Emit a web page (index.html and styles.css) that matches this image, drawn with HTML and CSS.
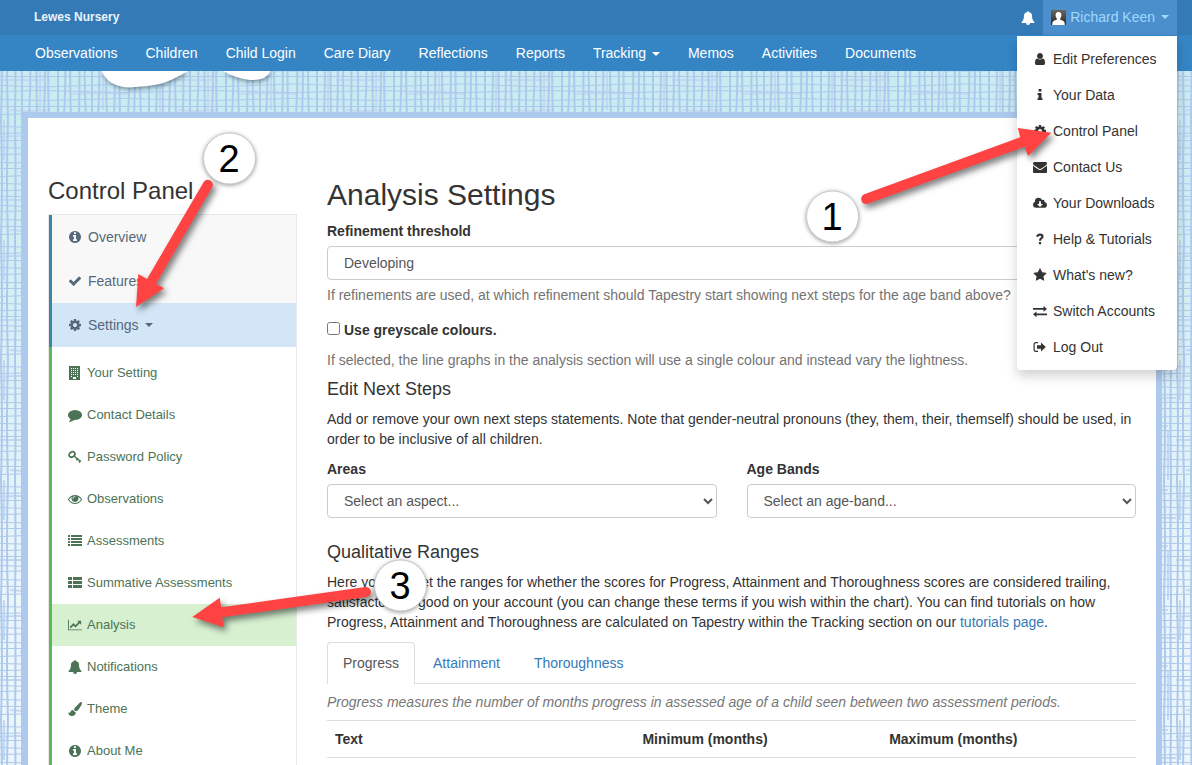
FILE: index.html
```html
<!DOCTYPE html>
<html lang="en">
<head>
    <meta charset="UTF-8">
    <meta name="viewport" content="width=device-width, initial-scale=1.0">
    <title>Analysis Settings - Lewes Nursery</title>
    <link rel="stylesheet" href="styles.css">
</head>
<body>
    <svg class="icon-set" aria-hidden="true">
        <symbol id="i-bell" viewBox="0 0 1792 1792"><path d="M912 1696q0-16-16-16-59 0-101.500-42.500t-42.500-101.500q0-16-16-16t-16 16q0 73 51.500 124.500t124.500 51.500q16 0 16-16zm816-288q0 52-38 90t-90 38h-448q0 106-75 181t-181 75-181-75-75-181h-448q-52 0-90-38t-38-90q50-42 91-88t85-119.500 74.500-158.500 50-206 19.500-260q0-152 117-282.500t307-158.500q-8-19-8-39 0-40 28-68t68-28 68 28 28 68q0 20-8 39 190 28 307 158.500t117 282.500q0 139 19.500 260t50 206 74.500 158.500 85 119.500 91 88z"/></symbol>
        <symbol id="i-check" viewBox="0 0 1792 1792"><path d="M1671 566q0 40-28 68l-724 724-136 136q-28 28-68 28t-68-28l-136-136-362-362q-28-28-28-68t28-68l136-136q28-28 68-28t68 28l294 295 656-657q28-28 68-28t68 28l136 136q28 28 28 68z"/></symbol>
        <symbol id="i-cog" viewBox="0 0 1792 1792"><path d="M1152 896q0-106-75-181t-181-75-181 75-75 181 75 181 181 75 181-75 75-181zm512-109v222q0 12-8 23t-20 13l-185 28q-19 54-39 91 35 50 107 138 10 12 10 25t-9 23q-27 37-99 108t-94 71q-12 0-26-9l-138-108q-44 23-91 38-16 136-29 186-7 28-36 28h-222q-14 0-24.500-8.500t-11.500-21.500l-28-184q-49-16-90-37l-141 107q-10 9-25 9-14 0-25-11-126-114-165-168-7-10-7-23 0-12 8-23 15-21 51-66.500t54-70.500q-27-50-41-99l-183-27q-13-2-21-12.500t-8-23.500v-222q0-12 8-23t19-13l186-28q14-46 39-92-40-57-107-138-10-12-10-24 0-10 9-23 26-36 98.500-107.500t94.500-71.500q13 0 26 10l138 107q44-23 91-38 16-136 29-186 7-28 36-28h222q14 0 24.500 8.500t11.500 21.500l28 184q49 16 90 37l142-107q9-9 24-9 13 0 25 10 129 119 165 170 7 8 7 22 0 12-8 23-15 21-51 66.500t-54 70.500q26 50 41 98l183 28q13 2 21 12.500t8 23.500z"/></symbol>
        <symbol id="i-info-circle" viewBox="0 0 1792 1792"><path d="M1152 1376v-160q0-14-9-23t-23-9h-96v-512q0-14-9-23t-23-9h-320q-14 0-23 9t-9 23v160q0 14 9 23t23 9h96v320h-96q-14 0-23 9t-9 23v160q0 14 9 23t23 9h448q14 0 23-9t9-23zm-128-896v-160q0-14-9-23t-23-9h-192q-14 0-23 9t-9 23v160q0 14 9 23t23 9h192q14 0 23-9t9-23zm640 416q0 209-103 385.500t-279.500 279.500-385.500 103-385.500-103-279.500-279.500-103-385.500 103-385.500 279.500-279.500 385.500-103 385.500 103 279.500 279.500 103 385.500z"/></symbol>
        <symbol id="i-info" viewBox="0 0 1792 1792"><path d="M1216 1344v128q0 26-19 45t-45 19h-512q-26 0-45-19t-19-45v-128q0-26 19-45t45-19h64v-384h-64q-26 0-45-19t-19-45v-128q0-26 19-45t45-19h384q26 0 45 19t19 45v576h64q26 0 45 19t19 45zm-128-1152v192q0 26-19 45t-45 19h-256q-26 0-45-19t-19-45v-192q0-26 19-45t45-19h256q26 0 45 19t19 45z"/></symbol>
        <symbol id="i-star" viewBox="0 0 1792 1792"><path d="M1728 647q0 22-26 48l-363 354 86 500q1 7 1 20 0 21-10.500 35.500t-30.500 14.500q-19 0-40-12l-449-236-449 236q-22 12-40 12-21 0-31.500-14.500t-10.500-35.500q0-6 2-20l86-500-364-354q-25-27-25-48 0-37 56-46l502-73 225-455q19-41 49-41t49 41l225 455 502 73q56 9 56 46z"/></symbol>
        <symbol id="i-envelope" viewBox="0 0 1792 1792"><path d="M1792 710v794q0 66-47 113t-113 47h-1472q-66 0-113-47t-47-113v-794q44 49 101 87 362 246 497 345 57 42 92.500 65.500t94.500 48 110 24.500h2q51 0 110-24.500t94.500-48 92.500-65.500q170-123 498-345 57-39 100-87zm0-294q0 79-49 151t-122 123q-376 261-468 325-10 7-42.500 30.500t-54 38-52 32.500-57.500 27-50 9h-2q-23 0-50-9t-57.500-27-52-32.500-54-38-42.500-30.500q-91-64-262-182.500t-205-142.500q-62-42-117-115.500t-55-136.500q0-78 41.500-130t118.500-52h1472q65 0 112.500 47t47.500 113z"/></symbol>
        <symbol id="i-comment" viewBox="0 0 1792 1792"><path d="M1792 896q0 174-120 321.500t-326 233-450 85.500q-70 0-145-8-198 175-460 242-49 14-114 22-17 2-30.500-9t-17.500-29v-1q-3-4-.5-12t2-10 4.500-9.500l6-9 7-8.500 8-9q7-8 31-34.500t34.500-38 31-39.500 32.500-51 27-59 26-76q-157-89-247.500-220t-90.500-281q0-130 71-248.500t191-204.500 286-136.500 348-50.500q244 0 450 85.500t326 233 120 321.500z"/></symbol>
        <symbol id="i-eye" viewBox="0 0 1792 1792"><path d="M1664 960q-152-236-381-353 61 104 61 225 0 185-131.500 316.500t-316.500 131.500-316.500-131.500-131.500-316.500q0-121 61-225-229 117-381 353 133 205 333.500 326.500t434.500 121.500 434.500-121.500 333.500-326.500zm-720-384q0-20-14-34t-34-14q-125 0-214.500 89.500t-89.500 214.500q0 20 14 34t34 14 34-14 14-34q0-86 61-147t147-61q20 0 34-14t14-34zm848 384q0 34-20 69-140 230-376.500 368.500t-499.500 138.500-499.500-139-376.500-368q-20-35-20-69t20-69q140-229 376.500-368t499.500-139 499.500 139 376.500 368q20 35 20 69z"/></symbol>
        <symbol id="i-user" viewBox="0 0 1792 1792"><path d="M1536 1399q0 109-62.500 187t-150.500 78h-854q-88 0-150.500-78t-62.500-187q0-85 8.500-160.500t31.500-152 58.500-131 94-89 134.500-34.500q131 128 313 128t313-128q76 0 134.500 34.500t94 89 58.500 131 31.500 152 8.500 160.500zm-256-887q0 159-112.500 271.500t-271.500 112.500-271.500-112.500-112.500-271.500 112.500-271.500 271.500-112.500 271.500 112.500 112.500 271.500z"/></symbol>
        <symbol id="i-list" viewBox="0 0 14 14"><path d="M0 1h2v2H0zM3 1h11v2H3zM0 4h2v2H0zM3 4h11v2H3zM0 7h2v2H0zM3 7h11v2H3zM0 10h2v2H0zM3 10h11v2H3z"/></symbol>
        <symbol id="i-th-list" viewBox="0 0 14 14"><path d="M0 1h4v3H0zM5 1h9v3H5zM0 5h4v3H0zM5 5h9v3H5zM0 9h4v3H0zM5 9h9v3H5z"/></symbol>
        <symbol id="i-building" viewBox="0 0 14 14"><path fill-rule="evenodd" d="M1 0h11v14H1zM3 2v1h1V2zm2 0v1h1V2zm2 0v1h1V2zm2 0v1h1V2zM3 4v1h1V4zm2 0v1h1V4zm2 0v1h1V4zm2 0v1h1V4zM3 6v1h1V6zm2 0v1h1V6zm2 0v1h1V6zm2 0v1h1V6zM3 8v1h1V8zm2 0v1h1V8zm2 0v1h1V8zm2 0v1h1V8zM3 10v1h1v-1zm6 0v1h1v-1zM5 11v2h3v-2z"/></symbol>
        <symbol id="i-key" viewBox="0 0 14 14"><g fill="none" stroke="currentColor"><ellipse cx="4" cy="4.500" rx="3.100" ry="2.400" transform="rotate(-35 4 4.500)" stroke-width="1.700"/><path stroke-width="1.600" d="M6 6l6.500 5.500M8.300 10.300l1.800-2M11 12.500l1.800-2"/></g></symbol>
        <symbol id="i-chart" viewBox="0 0 16 14"><path d="M0 1h1v11h15v1H0z"/><path fill="none" stroke="currentColor" stroke-width="1.900" d="M2.500 10l3.800-3.800 2.300 2.300L13 4"/><path d="M10.400 2H15v4.600z"/></symbol>
        <symbol id="i-brush" viewBox="0 0 14 14"><path d="M12.500 0q1.500 0 1.500 1.300 0 1-2.200 4.500Q9.700 9 8.500 9.200 6.500 9.300 6 7.300q0-.8 2.300-3Q11.500.8 12.500 0zM5.300 8q.6 1.700 2.400 2.200Q7.800 14 3.800 14 .5 14 0 10.300q1.400 1 2.100.1Q3 8 5.300 8z"/></symbol>
        <symbol id="i-cloud" viewBox="0 0 15 14"><path fill-rule="evenodd" d="M3.500 12.200Q0 12 0 8.900q0-2.200 2-3.200Q1.900 1.500 6 1.300q2.700 0 3.700 2.500 2.600-.8 2.800 2.200Q15 6.700 15 9.200q0 3-3.200 3zM6.500 5v3H4.300l3.200 3.200L10.700 8H8.500V5z"/></symbol>
        <symbol id="i-question" viewBox="0 0 14 14"><path fill="none" stroke="currentColor" stroke-width="2.200" d="M4.200 4.700Q4.700 2.600 7 2.600q2.500 0 2.500 1.900 0 1-1.300 1.900Q7 7.200 7 8.800"/><path d="M5.900 10h2.200v2.300H5.900z"/></symbol>
        <symbol id="i-exchange" viewBox="0 0 14 14"><path d="M0 4h10.500V2L14 4.900l-3.500 2.800V5.800H0zM14 9.400H3.500V7.500L0 10.300l3.500 2.900v-2H14z"/></symbol>
        <symbol id="i-sign-out" viewBox="0 0 14 14"><path fill="none" stroke="currentColor" stroke-width="1.200" d="M5 2.600H3Q1.100 2.600 1.100 4.500v5Q1.100 11.400 3 11.400h2"/><path d="M4 5.200h4V2.500L12.800 7 8 11.500V8.800H4z"/></symbol>
    </svg>

    <header>
        <div class="topbar">
            <a href="#" class="brand">Lewes Nursery</a>
            <div class="account">
                <a href="#" class="alerts" aria-label="Alerts"><svg class="icon"><use href="#i-bell"/></svg></a>
                <div class="user">
                    <button type="button" class="user-toggle" aria-expanded="true">
                        <svg class="avatar" viewBox="0 0 15 15">
                            <defs>
                                <linearGradient id="shade" x1="0" y1="0" x2="0" y2="1">
                                    <stop offset="0" stop-color="#6b6560"/>
                                    <stop offset="1" stop-color="#2b2826"/>
                                </linearGradient>
                            </defs>
                            <rect width="15" height="15" fill="url(#shade)"/>
                            <path fill="#fff" d="M7.500 2q2.900 0 2.900 3.300 0 2.100-1.200 3.200v1.300q3.600.8 4.300 2.500l.3 2.700H1.200l.3-2.700q.7-1.700 4.300-2.500V8.500Q4.600 7.400 4.600 5.300 4.600 2 7.500 2z"/>
                        </svg>
                        Richard Keen
                        <span class="caret"></span>
                    </button>
                    <ul class="user-menu">
                        <li><a href="#"><svg class="icon"><use href="#i-user"/></svg>Edit Preferences</a></li>
                        <li><a href="#"><svg class="icon"><use href="#i-info"/></svg>Your Data</a></li>
                        <li><a href="#"><svg class="icon"><use href="#i-cog"/></svg>Control Panel</a></li>
                        <li><a href="#"><svg class="icon"><use href="#i-envelope"/></svg>Contact Us</a></li>
                        <li><a href="#"><svg class="icon"><use href="#i-cloud"/></svg>Your Downloads</a></li>
                        <li><a href="#"><svg class="icon"><use href="#i-question"/></svg>Help &amp; Tutorials</a></li>
                        <li><a href="#"><svg class="icon"><use href="#i-star"/></svg>What's new?</a></li>
                        <li><a href="#"><svg class="icon"><use href="#i-exchange"/></svg>Switch Accounts</a></li>
                        <li><a href="#"><svg class="icon"><use href="#i-sign-out"/></svg>Log Out</a></li>
                    </ul>
                </div>
            </div>
        </div>
        <nav class="main-nav">
            <a href="#">Observations</a>
            <a href="#">Children</a>
            <a href="#">Child Login</a>
            <a href="#">Care Diary</a>
            <a href="#">Reflections</a>
            <a href="#">Reports</a>
            <a href="#">Tracking <span class="caret"></span></a>
            <a href="#">Memos</a>
            <a href="#">Activities</a>
            <a href="#">Documents</a>
        </nav>
    </header>

    <!-- bottom edge of the logo, the rest is under the header -->
    <div class="banner">
        <svg class="logo" viewBox="0 0 300 41" aria-hidden="true">
            <path d="M101 -2Q107 16 130 16.500 146 16 160 13 174 9 191 -2z"/>
            <path d="M220 -2Q236 8 250 9 268 10 271 -2z"/>
        </svg>
    </div>

    <div class="panel">
        <aside class="sidebar">
            <h2>Control Panel</h2>
            <div class="side-menu">
                <ul class="side-top">
                    <li><a href="#"><svg class="icon"><use href="#i-info-circle"/></svg>Overview</a></li>
                    <li><a href="#"><svg class="icon"><use href="#i-check"/></svg>Features</a></li>
                    <li><a href="#" class="active"><svg class="icon"><use href="#i-cog"/></svg>Settings <span class="caret"></span></a></li>
                </ul>
                <ul class="side-sub">
                    <li><a href="#"><svg class="icon"><use href="#i-building"/></svg>Your Setting</a></li>
                    <li><a href="#"><svg class="icon"><use href="#i-comment"/></svg>Contact Details</a></li>
                    <li><a href="#"><svg class="icon"><use href="#i-key"/></svg>Password Policy</a></li>
                    <li><a href="#"><svg class="icon"><use href="#i-eye"/></svg>Observations</a></li>
                    <li><a href="#"><svg class="icon"><use href="#i-list"/></svg>Assessments</a></li>
                    <li><a href="#"><svg class="icon"><use href="#i-th-list"/></svg>Summative Assessments</a></li>
                    <li><a href="#" class="active"><svg class="icon"><use href="#i-chart"/></svg>Analysis</a></li>
                    <li><a href="#"><svg class="icon"><use href="#i-bell"/></svg>Notifications</a></li>
                    <li><a href="#"><svg class="icon"><use href="#i-brush"/></svg>Theme</a></li>
                    <li><a href="#"><svg class="icon"><use href="#i-info-circle"/></svg>About Me</a></li>
                </ul>
            </div>
        </aside>

        <main>
            <h1>Analysis Settings</h1>
            <label for="threshold">Refinement threshold</label>
            <select id="threshold">
                <option>Developing</option>
            </select>
            <p class="help">If refinements are used, at which refinement should Tapestry start showing next steps for the age band above?</p>

            <div class="check">
                <input type="checkbox" id="greyscale">
                <label for="greyscale">Use greyscale colours.</label>
            </div>
            <p class="help">If selected, the line graphs in the analysis section will use a single colour and instead vary the lightness.</p>

            <h3>Edit Next Steps</h3>
            <p>Add or remove your own next steps statements. Note that gender-neutral pronouns (they, them, their, themself) should be used, in order to be inclusive of all children.</p>
            <div class="row">
                <div class="col">
                    <label for="areas">Areas</label>
                    <select id="areas">
                        <option>Select an aspect...</option>
                    </select>
                </div>
                <div class="col">
                    <label for="ageBands">Age Bands</label>
                    <select id="ageBands">
                        <option>Select an age-band...</option>
                    </select>
                </div>
            </div>

            <h3>Qualitative Ranges</h3>
            <p>Here you can set the ranges for whether the scores for Progress, Attainment and Thoroughness scores are considered trailing, satisfactory or good on your account (you can change these terms if you wish within the chart). You can find tutorials on how Progress, Attainment and Thoroughness are calculated on Tapestry within the Tracking section on our <a href="#">tutorials page</a>.</p>

            <div class="tabs">
                <a href="#" class="active">Progress</a>
                <a href="#">Attainment</a>
                <a href="#">Thoroughness</a>
            </div>
            <p class="tab-note">Progress measures the number of months progress in assessed age of a child seen between two assessment periods.</p>
            <table>
                <thead>
                    <tr>
                        <th class="col-text">Text</th>
                        <th class="col-min">Minimum (months)</th>
                        <th>Maximum (months)</th>
                    </tr>
                </thead>
            </table>
        </main>
    </div>

    <!-- numbered steps and arrows -->
    <svg class="steps" width="1192" height="765" viewBox="0 0 1192 765">
        <g class="arrow">
            <path d="M864.300 194.300L1020.300 137.300 1017.700 128 1051.300 132.700 1028 156 1024.700 146.700 867.700 203.700A5 5 0 0 1 864.300 194.300z"/>
            <path d="M203.700 182L147 279 138.300 274 136 307 164 288.300 156 283.700 212.300 187A5 5 0 0 0 203.700 182z"/>
            <path d="M365.300 587L221.300 607.300 219.700 597.700 192.300 617 223.700 627.300 222.300 617.300 366.700 596.900A5 5 0 0 0 365.300 587z"/>
        </g>
        <g class="step">
            <ellipse cx="832.500" cy="216.500" rx="26" ry="25.500"/>
            <ellipse cx="229.500" cy="158.500" rx="26" ry="25.500"/>
            <ellipse cx="400.500" cy="585.500" rx="26" ry="25.500"/>
        </g>
        <g class="step-number">
            <text x="832" y="230">1</text>
            <text x="229" y="172">2</text>
            <text x="400" y="599">3</text>
        </g>
    </svg>
</body>
</html>
```
FILE: styles.css
```css
* {
    box-sizing: border-box;
}
body {
    font-family: "Liberation Sans", Arial, sans-serif;
    font-size: 14px;
    line-height: 20px;
    margin: 0;
    color: #333;
    /* woven cloth: uneven threads over a pale gradient */
    background-color: #ecf5fa;
    background-image:
        url("data:image/svg+xml,%3Csvg xmlns='http://www.w3.org/2000/svg' width='168' height='120' fill='none' stroke='%23adc9ed'%3E%3Cpath stroke='%23c3d8f1' stroke-width='2' d='M0 17q20-2 40 0M60 31q25 2 50 0M120 10h40M20 52q30-2 60 0M100 66q30 2 60 0M0 80h44M70 94q30-2 58 0M10 110q20 2 40 0M130 38h38M4 0v40M40 60v50M74 10v50M103 50v60M146 0v44M160 70v50'/%3E%3Cpath stroke-width='2' d='M1 0q2 60 0 120M8 0q-2 60 0 120M15 0q1 60 0 120M22 0v120M29 0q3 60 0 120M37 0q-1 60 0 120M44 0q2 60 0 120M49 0q-2 60 0 120M58 0v120M64 0q3 60 0 120M71 0q-2 60 0 120M79 0q1 60 0 120M86 0q-3 60 0 120M92 0v120M98 0q3 60 0 120M107 0q-2 60 0 120M114 0q2 60 0 120M120 0q-1 60 0 120M128 0q3 60 0 120M134 0q2 60 0 120M141 0q-2 60 0 120M149 0v120M156 0q2 60 0 120M163 0q-1 60 0 120'/%3E%3Cpath d='M0 6.500q42 2 84 0t84 0M0 13.500q42-2 84 0t84 0M0 20.500h168M0 27.500q42 3 84 0t84 0M0 34.500q42-2 84 0t84 0M0 42.500q42 1 84 0t84 0M0 48.500h168M0 56.500q42-3 84 0t84 0M0 63.500q42 2 84 0t84 0M0 70.500q42-1 84 0t84 0M0 76.500h168M0 85.500q42 3 84 0t84 0M0 91.500q42-2 84 0t84 0M0 99.500q42 2 84 0t84 0M0 106.500h168M0 114.500q42-2 84 0t84 0'/%3E%3C/svg%3E"),
        linear-gradient(#c8ecf0, #c8ecf0 110px, #ecf5fa 600px);
    background-size: 168px 120px, 100% 100%;
}
a {
    color: #337ab7;
    text-decoration: none;
}
ul {
    list-style: none;
    margin: 0;
    padding: 0;
}
h1, h2, h3 {
    font-weight: normal;
    margin: 0 0 10px;
}
h1 {
    font-size: 30px;
    line-height: 33px;
}
h2 {
    font-size: 24px;
    line-height: 26px;
}
h3 {
    font-size: 18px;
    line-height: 20px;
}
p {
    margin: 0 0 10px;
}
.icon-set {
    display: none;
}
.icon {
    width: 14px;
    height: 14px;
    fill: currentColor;
    flex: none;
}
.caret {
    display: inline-block;
    border-top: 4px solid;
    border-left: 4px solid transparent;
    border-right: 4px solid transparent;
    margin-left: 2px;
    vertical-align: middle;
}

/* header */
.topbar {
    display: flex;
    justify-content: space-between;
    height: 35px;
    padding: 0 15px 0 34px;
    background-color: #337ab7;
}
.brand {
    color: #eaf3fb;
    font-size: 12px;
    font-weight: bold;
    line-height: 34px;
}
.account {
    display: flex;
}
.alerts {
    display: flex;
    align-items: center;
    padding: 0 8px;
    color: #fff;
}
.user {
    position: relative;
}
.user-toggle {
    display: flex;
    align-items: center;
    gap: 4px;
    height: 35px;
    padding: 0 8px 1px;
    border: 0;
    background-color: #4b8fcc;
    color: #9fd9ff;
    font: inherit;
    cursor: pointer;
}
.avatar {
    width: 15px;
    height: 15px;
}
.user-menu {
    position: absolute;
    top: 36px;
    right: 0;
    z-index: 10;
    width: 160px;
    padding: 5px 0;
    background-color: #fff;
    border-radius: 0 0 4px 4px;
    box-shadow: 0 6px 12px rgba(0, 0, 0, 0.18);
}
.user-menu a {
    display: flex;
    align-items: center;
    gap: 6px;
    padding: 8px 16px;
    color: #333;
    white-space: nowrap;
}
.user-menu a:hover {
    background-color: #f5f5f5;
}
.main-nav {
    display: flex;
    gap: 28px;
    padding: 8px 35px;
    background-color: #3585c5;
}
.main-nav a {
    color: #fff;
    white-space: nowrap;
}

.banner {
    height: 41px;
    overflow: hidden;
}
.logo {
    display: block;
    width: 300px;
    height: 41px;
    fill: #fff;
    filter: drop-shadow(1px 2px 2px rgba(60, 80, 100, 0.6));
}

/* content */
.panel {
    display: flex;
    gap: 30px;
    margin: 0 30px 0 22px;
    padding: 60px 20px 20px;
    background-color: #fff;
    border: 6px solid #adc9ed;
    border-bottom: 0;
}
.sidebar {
    flex: 0 0 249px;
}
.side-menu {
    border: 1px solid #e7e7e7;
}
.side-menu a {
    display: flex;
    align-items: center;
}
.side-menu .caret {
    margin-left: 0;
}
.side-top {
    border-left: 3px solid #3b86a5;
    background-color: #f8f8f8;
}
.side-top a {
    gap: 6px;
    padding: 12px 16px;
    color: #56687a;
}
.side-top .active {
    background-color: #d3e6f7;
}
.side-sub {
    border-left: 3px solid #5fb955;
    padding-top: 5px;
}
.side-sub a {
    gap: 5px;
    padding: 11px 16px;
    font-size: 13px;
    color: #4c7355;
}
.side-sub .active {
    background-color: #d6f0d0;
}
main {
    flex: 1;
    min-width: 0;
}
label {
    display: block;
    font-weight: bold;
    margin-bottom: 5px;
}
select {
    display: block;
    width: 100%;
    height: 34px;
    padding: 6px 12px;
    font: inherit;
    color: #555;
    background-color: #fff;
    border: 1px solid #ccc;
    border-radius: 4px;
}
.help {
    margin: 5px 0 15px;
    color: #737373;
}
.check {
    display: flex;
    gap: 4px;
}
.check input {
    width: 13px;
    height: 13px;
    margin: 2px 0 0;
}
.check label {
    margin-bottom: 5px;
}
.check + .help {
    margin-bottom: 9px;
}
.row {
    display: flex;
    gap: 30px;
    margin-bottom: 24px;
}
.col {
    flex: 1;
}
.tabs {
    display: flex;
    gap: 2px;
    border-bottom: 1px solid #ddd;
}
.tabs a {
    padding: 10px 15px;
    border: 1px solid transparent;
    border-bottom: 0;
    border-radius: 4px 4px 0 0;
}
.tabs .active {
    margin-bottom: -1px;
    padding-bottom: 11px;
    border-color: #ddd;
    background-color: #fff;
    color: #555;
}
.tab-note {
    margin: 8px 0;
    font-style: italic;
    color: #777;
}
table {
    width: 100%;
    border-collapse: collapse;
    table-layout: fixed;
}
th {
    padding: 8px;
    text-align: left;
    border-top: 1px solid #ddd;
    border-bottom: 1px solid #ddd;
}
.col-text {
    width: 38%;
}
.col-min {
    width: 30.5%;
}

/* step markers, drawn over everything */
.steps {
    position: absolute;
    top: 0;
    left: 0;
    z-index: 20;
    pointer-events: none;
}
.arrow {
    fill: #ff4343;
    filter: drop-shadow(3px 4px 3px rgba(0, 0, 0, 0.5));
}
.step {
    fill: #fff;
    stroke: #c9c9c9;
    filter: drop-shadow(0 1px 2px rgba(0, 0, 0, 0.4));
}
.step-number {
    fill: #000;
    font-size: 38px;
    text-anchor: middle;
}
```
